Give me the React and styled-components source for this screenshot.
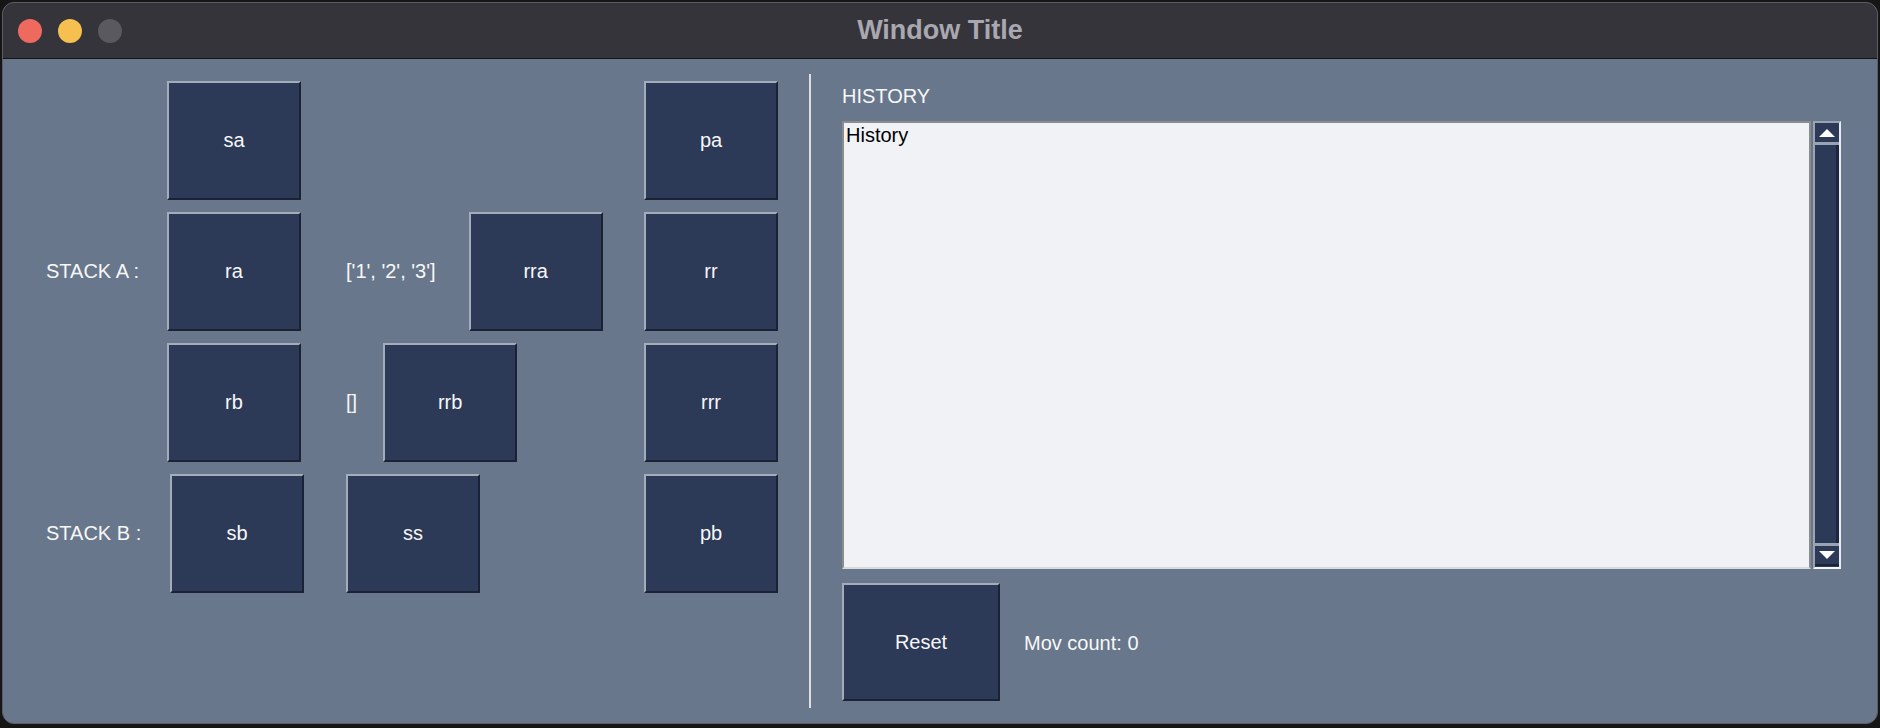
import React from 'react';
import styled, { createGlobalStyle } from 'styled-components';

const GlobalStyle = createGlobalStyle`
  html, body {
    margin: 0;
    padding: 0;
    background: #161616;
  }
  body {
    font-family: "Liberation Sans", Arial, sans-serif;
  }
`;

function App() {
  return (
    <>
      <GlobalStyle />
      <Window>
        <TitleBar>
          <Lights>
            <Light color="#ee6a5f" />
            <Light color="#f5c04f" />
            <Light color="#5a595f" />
          </Lights>
          <Title>Window Title</Title>
          <span />
        </TitleBar>
        <Content>
          <LeftPanel>
            <span />
            <Cell1><OpButton>sa</OpButton></Cell1>
            <span />
            <OpButton>pa</OpButton>

            <StackLabel>STACK A :</StackLabel>
            <Cell1><OpButton>ra</OpButton></Cell1>
            <Middle gap={33}>
              <StackText>['1', '2', '3']</StackText>
              <OpButton>rra</OpButton>
            </Middle>
            <OpButton>rr</OpButton>

            <span />
            <Cell1><OpButton>rb</OpButton></Cell1>
            <Middle>
              <StackText>[]</StackText>
              <OpButton>rrb</OpButton>
            </Middle>
            <OpButton>rrr</OpButton>

            <StackLabel>STACK B :</StackLabel>
            <Cell1 shift={4}><OpButton>sb</OpButton></Cell1>
            <Middle>
              <OpButton>ss</OpButton>
            </Middle>
            <OpButton>pb</OpButton>
          </LeftPanel>
          <Separator />
          <RightPanel>
            <HistoryLabel>HISTORY</HistoryLabel>
            <HistoryBox>
              <TextArea>History</TextArea>
              <Scrollbar>
                <ArrowButton>
                  <Arrow up />
                </ArrowButton>
                <Trough />
                <ArrowButton>
                  <Arrow />
                </ArrowButton>
              </Scrollbar>
            </HistoryBox>
            <BottomRow>
              <OpButton wide>Reset</OpButton>
              <CountText>Mov count: 0</CountText>
            </BottomRow>
          </RightPanel>
        </Content>
      </Window>
    </>
  );
}

const Arrow = ({ up }) => (
  <svg width="16" height="8" viewBox="0 0 16 8">
    <path fill="#ffffff" d={up ? 'M0 8 L8 0 L16 8 Z' : 'M0 0 L8 8 L16 0 Z'} />
  </svg>
);

const Window = styled.div`
  margin: 2px;
  width: 1876px;
  height: 722px;
  box-sizing: border-box;
  border: 1px solid #5c5c62;
  border-radius: 12px;
  overflow: hidden;
  display: flex;
  flex-direction: column;
  background: #68778b;
`;

const TitleBar = styled.div`
  height: 56px;
  box-sizing: border-box;
  background: #35343b;
  border-bottom: 1px solid #141418;
  display: grid;
  grid-template-columns: 1fr auto 1fr;
  align-items: center;
`;

const Lights = styled.div`
  display: flex;
  gap: 16px;
  padding-left: 15px;
`;

const Light = styled.div`
  width: 24px;
  height: 24px;
  border-radius: 50%;
  background: ${(p) => p.color};
`;

const Title = styled.div`
  font-family: "Liberation Sans", Arial, sans-serif;
  font-weight: bold;
  font-size: 27px;
  color: #a9a8b0;
`;

const Content = styled.div`
  flex: 1;
  display: flex;
`;

const LeftPanel = styled.div`
  width: 806px;
  box-sizing: border-box;
  padding: 16px 0 0 43px;
  display: grid;
  grid-template-columns: 120px 137px 341px 134px;
  grid-auto-rows: 131px;
  align-items: center;
  align-content: start;
`;

const Cell1 = styled.div`
  padding-left: ${(p) => (p.shift ? p.shift : 1)}px;
`;

const Middle = styled.div`
  display: flex;
  align-items: center;
  gap: ${(p) => (p.gap ? p.gap : 26)}px;
  padding-left: 43px;
`;

const OpButton = styled.button`
  width: ${(p) => (p.wide ? 158 : 134)}px;
  height: ${(p) => (p.wide ? 118 : 119)}px;
  box-sizing: border-box;
  background: #2c3957;
  border-style: solid;
  border-width: 2px;
  border-color: #a3acba #1b2235 #1b2235 #a3acba;
  color: #f7f7f7;
  font-family: "Liberation Sans", Arial, sans-serif;
  font-size: 20px;
  padding: 0;
  cursor: pointer;
`;

const StackLabel = styled.div`
  color: #f7f7f7;
  font-size: 20px;
`;

const StackText = styled.span`
  color: #f7f7f7;
  font-size: 20px;
`;

const Separator = styled.div`
  width: 2px;
  margin: 15px 0;
  background: #dedfe2;
`;

const RightPanel = styled.div`
  flex: 1;
  display: flex;
  flex-direction: column;
  padding: 26px 36px 22px 31px;
`;

const HistoryLabel = styled.div`
  color: #f7f7f7;
  font-size: 20px;
  line-height: 23px;
  margin-bottom: 13px;
`;

const HistoryBox = styled.div`
  flex: 1;
  display: flex;
  gap: 2px;
`;

const TextArea = styled.div`
  flex: 1;
  box-sizing: border-box;
  background: #f1f2f6;
  border-style: solid;
  border-width: 2px;
  border-color: #8c8c8c #8c8c8c #d9d9d9 #8c8c8c;
  padding: 1px 2px;
  color: #000000;
  font-size: 20px;
  line-height: 23px;
`;

const Scrollbar = styled.div`
  width: 28px;
  box-sizing: border-box;
  display: flex;
  flex-direction: column;
  background: #2c3957;
  border-style: solid;
  border-width: 2px;
  border-color: #9aa3b1 #e8ebf0 #f4f6f9 #9aa3b1;
  padding: 1px 0;
`;

const ArrowButton = styled.div`
  height: 18px;
  display: flex;
  align-items: center;
  justify-content: center;
  background: #2c3957;
  border-bottom: 2px solid #1b2235;
  &:first-child {
    border-bottom: 3px solid #9aa3b1;
  }
  &:last-child {
    border-top: 3px solid #9aa3b1;
  }
`;

const Trough = styled.div`
  flex: 1;
  background: #2c3957;
  border-right: 3px solid #1d2540;
`;

const BottomRow = styled.div`
  margin-top: 14px;
  display: flex;
  align-items: center;
  gap: 24px;
`;

const CountText = styled.span`
  color: #f7f7f7;
  font-size: 20px;
  margin-top: 3px;
`;

export default App;
